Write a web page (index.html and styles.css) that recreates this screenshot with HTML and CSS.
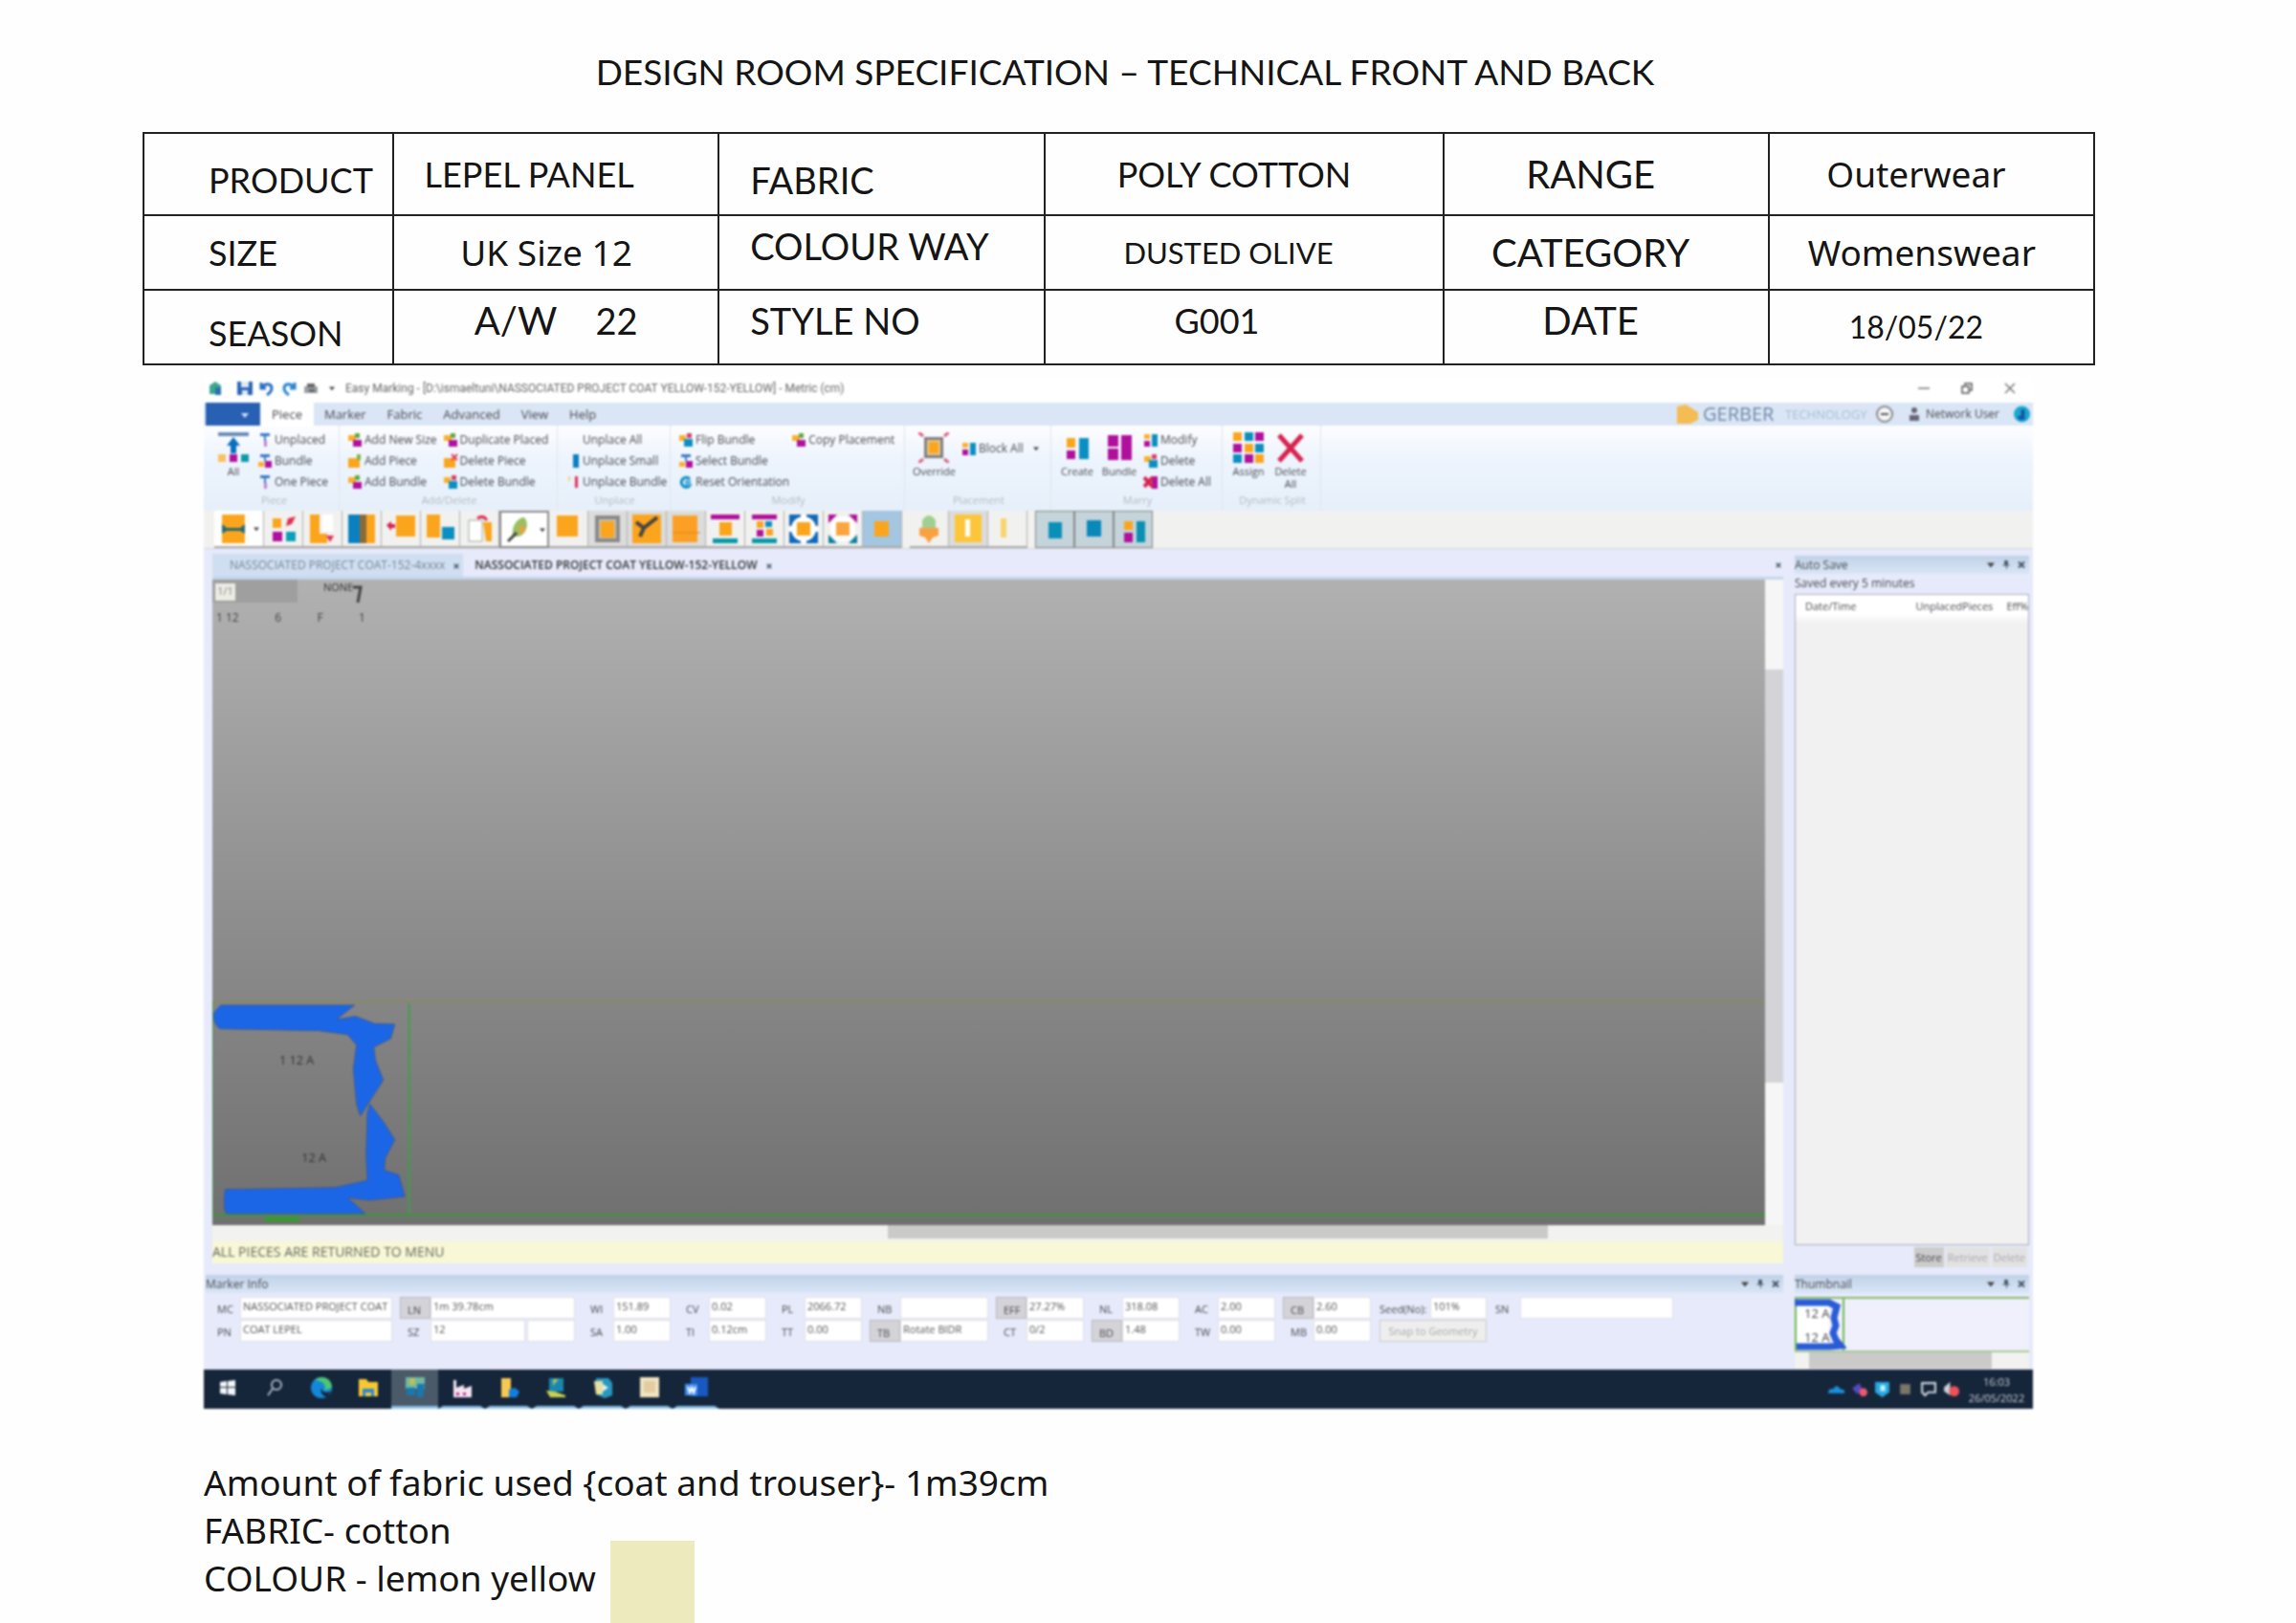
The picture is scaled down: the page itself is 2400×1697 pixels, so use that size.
FILE: index.html
```html
<!DOCTYPE html>
<html lang="en">
<head>
<meta charset="utf-8">
<title>Design Room Specification</title>
<link rel="stylesheet" href="styles.css">
</head>
<body>
<svg class="defs" aria-hidden="true">
  <symbol id="i-bundle" viewBox="0 0 16 16"><path fill="#fbb02a" d="M1 3h8v6H1z"/><path fill="#63a844" d="M8 1h5v5H8z"/><path fill="#b0109c" d="M6 8h9v7H6z"/></symbol>
  <symbol id="i-piece" viewBox="0 0 16 16"><path fill="#fba51c" d="M1 5h12v10H1z"/><path fill="#7ab648" d="M10 1h4v6h-4z"/></symbol>
  <symbol id="i-delpiece" viewBox="0 0 16 16"><path fill="#fba51c" d="M1 5h12v10H1z"/><path stroke="#e0405a" stroke-width="2" d="M9 1l6 6m0-6L9 7"/></symbol>
  <symbol id="i-blue" viewBox="0 0 16 16"><path fill="#fbb02a" d="M1 3h7v6H1z"/><path fill="#d8406a" d="M9 1h5v5H9z"/><path fill="#0a8fc0" d="M6 7h9v8H6z"/></symbol>
  <symbol id="i-pin" viewBox="0 0 16 16"><path fill="#3a78c8" d="M3 1h10v3H9v5H7V4H3z"/><path fill="#c080d0" d="M7 9h3v6H7z"/></symbol>
  <symbol id="i-pinb" viewBox="0 0 16 16"><path fill="#3a78c8" d="M3 1h10v3H9v4H7V4H3z"/><path fill="#fbb02a" d="M1 9h6v5H1z"/><path fill="#b0109c" d="M8 8h7v7H8z"/></symbol>
  <symbol id="i-bar" viewBox="0 0 16 16"><path fill="#0a7fc0" d="M8 1h6v14H8z"/></symbol>
  <symbol id="i-bang" viewBox="0 0 16 16"><path fill="#e03060" d="M10 2h3v12h-3z"/><path fill="#fbd08a" d="M3 2h2v5H3z"/></symbol>
  <symbol id="i-reset" viewBox="0 0 16 16"><path fill="none" stroke="#0a8fc0" stroke-width="3" d="M12 5a5 5 0 1 0 1 5"/><path fill="#58b0e0" d="M7 6h6v6H7z"/></symbol>
  <symbol id="i-marry" viewBox="0 0 16 16"><path fill="#fbb02a" d="M1 2h6v5H1z"/><path fill="#b0109c" d="M1 9h6v6H1z"/><path fill="#0a8fc0" d="M9 2h6v13H9z"/></symbol>
  <symbol id="i-marryx" viewBox="0 0 16 16"><path fill="#b0109c" d="M9 2h6v13H9z"/><path stroke="#d8234e" stroke-width="4" d="M1 3l9 10M10 3L1 13"/></symbol>
  <symbol id="i-caret" viewBox="0 0 8 8"><path fill="#444" d="M0 2h8L4 7z"/></symbol>
  <symbol id="i-push" viewBox="0 0 8 10"><path fill="#456" d="M2 0h4v5h2v1H5v4H4V6H0V5h2z"/></symbol>
  <symbol id="i-x" viewBox="0 0 8 8"><path stroke="#456" stroke-width="2" d="M1 1l6 6m0-6L1 7"/></symbol>
</svg>

<h1 class="sheet-title">DESIGN ROOM SPECIFICATION – TECHNICAL FRONT AND BACK</h1>

<table class="spec">
  <colgroup><col class="c1"><col class="c2"><col class="c2"><col class="c4"><col class="c2"><col class="c2"></colgroup>
  <tr class="r1">
    <th class="left low">PRODUCT</th><td class="far">LEPEL PANEL</td><th class="name low">FABRIC</th><td class="near">POLY COTTON</td><th class="wide mid-left">RANGE</th><td class="human mid-left">Outerwear</td>
  </tr>
  <tr class="r2">
    <th class="left">SIZE</th><td class="human near">UK Size 12</td><th class="name high">COLOUR WAY</th><td class="tiny mid-left">DUSTED OLIVE</td><th class="wide mid-left">CATEGORY</th><td class="human near">Womenswear</td>
  </tr>
  <tr class="r2">
    <th class="left low">SEASON</th><td class="wide high">A/W<span class="year">22</span></td><th class="name high">STYLE NO</th><td class="far high">G001</td><th class="wide mid-left high">DATE</th><td class="date mid-left">18/05/22</td>
  </tr>
</table>

<main class="app">
  <header class="titlebar">
    <svg class="ic" viewBox="0 0 16 16"><path fill="#3aa890" d="M2 5l6-4 6 4v9H2z"/><path fill="#2a70b0" d="M8 7h6v8H8z"/></svg>
    <svg class="ic save" viewBox="0 0 16 16"><path fill="#2a66b4" d="M0 1h16v14H0z"/><path fill="#dfe9f6" d="M4 1h8v6H4zM5 10h6v5H5z"/></svg>
    <svg class="ic" viewBox="0 0 16 16"><path fill="none" stroke="#2a6fc0" stroke-width="3" d="M2 2v6h5M3 7c3-5 10-4 10 1 0 3-2 5-5 7"/></svg>
    <svg class="ic" viewBox="0 0 16 16"><path fill="none" stroke="#2a86d0" stroke-width="3" d="M14 2v6H9M13 7C10 2 3 3 3 8c0 3 2 5 5 7"/></svg>
    <svg class="ic" viewBox="0 0 16 16"><path fill="#9a9fa6" d="M1 6h14v7H1z"/><path fill="#666" d="M4 3h8v4H4zM6 9h6v3H6z"/></svg>
    <svg class="tick" viewBox="0 0 8 8"><use href="#i-caret"/></svg>
    <span class="caption">Easy Marking - [D:\ismaeltuni\NASSOCIATED PROJECT COAT YELLOW-152-YELLOW] - Metric (cm)</span>
    <span class="winbtns">
      <button aria-label="Minimise"><svg viewBox="0 0 12 12"><path stroke="#777" stroke-width="1.5" d="M0 6h12"/></svg></button>
      <button aria-label="Restore"><svg viewBox="0 0 12 12"><path fill="none" stroke="#555" stroke-width="1.5" d="M1 4h7v7H1zM4 3V1h7v7H9"/></svg></button>
      <button aria-label="Close"><svg viewBox="0 0 12 12"><path stroke="#777" stroke-width="1.5" d="M1 1l10 10m0-10L1 11"/></svg></button>
    </span>
  </header>

  <nav class="tabs">
    <button class="file" aria-label="File"><svg viewBox="0 0 8 8"><path fill="#cfe0ff" d="M0 2h8L4 7z"/></svg></button>
    <button class="tab on">Piece</button><button class="tab">Marker</button><button class="tab">Fabric</button><button class="tab">Advanced</button><button class="tab">View</button><button class="tab">Help</button>
    <span class="brand">
      <svg class="logo" viewBox="0 0 22 20"><path fill="#f4bc52" d="M0 2l9-2 13 8v8l-8 4H0z"/></svg>
      <b>GERBER</b><i>TECHNOLOGY</i>
      <svg class="round" viewBox="0 0 20 20"><circle cx="10" cy="10" r="8" fill="#f4f6fa" stroke="#888" stroke-width="2"/><path stroke="#555" stroke-width="2" d="M6 10h8"/></svg>
      <svg class="user" viewBox="0 0 12 16"><circle cx="6" cy="4" r="3" fill="#667"/><path fill="#667" d="M1 15V9h10v6z"/></svg>
      <span class="who">Network User</span>
      <svg class="globe" viewBox="0 0 18 18"><circle cx="9" cy="9" r="9" fill="#18a8d0"/><path fill="#1a50a0" d="M8 4h4v7H8zM4 11h8v4H6z"/></svg>
    </span>
  </nav>

  <section class="ribbon">
    <div class="group g1"><div class="tools">
      <button class="big"><svg viewBox="0 0 32 32"><path fill="#6a8cb4" d="M0 0h32v4H0z"/><path fill="#0a6fc0" d="M16 5l7 9h-4v8h-6v-8H9z"/><path fill="#fbc060" d="M0 23h8v8H0z"/><path fill="#b0109c" d="M12 23h8v8h-8z"/><path fill="#0a9aa8" d="M24 23h8v8h-8z"/></svg>All</button>
      <div class="stack"><button><svg><use href="#i-pin"/></svg>Unplaced</button><button><svg><use href="#i-pinb"/></svg>Bundle</button><button><svg><use href="#i-pin"/></svg>One Piece</button></div>
    </div><h2>Piece</h2></div>
    <div class="group g2"><div class="tools">
      <div class="stack"><button><svg><use href="#i-bundle"/></svg>Add New Size</button><button><svg><use href="#i-piece"/></svg>Add Piece</button><button><svg><use href="#i-bundle"/></svg>Add Bundle</button></div>
      <div class="stack"><button><svg><use href="#i-bundle"/></svg>Duplicate Placed</button><button><svg><use href="#i-delpiece"/></svg>Delete Piece</button><button><svg><use href="#i-blue"/></svg>Delete Bundle</button></div>
    </div><h2>Add/Delete</h2></div>
    <div class="group g3"><div class="tools">
      <div class="stack"><button><svg></svg>Unplace All</button><button><svg><use href="#i-bar"/></svg>Unplace Small</button><button><svg><use href="#i-bang"/></svg>Unplace Bundle</button></div>
    </div><h2>Unplace</h2></div>
    <div class="group g4"><div class="tools">
      <div class="stack"><button><svg><use href="#i-blue"/></svg>Flip Bundle</button><button><svg><use href="#i-pinb"/></svg>Select Bundle</button><button><svg><use href="#i-reset"/></svg>Reset Orientation</button></div>
      <div class="stack"><button><svg><use href="#i-bundle"/></svg>Copy Placement</button></div>
    </div><h2>Modify</h2></div>
    <div class="group g5"><div class="tools">
      <button class="big"><svg viewBox="0 0 32 32"><path fill="#7f7f7f" d="M6 5h20v22H6z"/><path fill="#e8c890" d="M9 8h14v16H9z"/><path fill="#fba51c" d="M11 10h10v12H11z"/><path stroke="#e06080" stroke-width="3" d="M0 0l5 4M32 0l-5 4M0 32l5-4M32 32l-5-4"/></svg>Override</button>
      <div class="stack mid"><button><svg><use href="#i-marry"/></svg>Block All <svg class="car"><use href="#i-caret"/></svg></button></div>
    </div><h2>Placement</h2></div>
    <div class="group g6"><div class="tools">
      <button class="big"><svg viewBox="0 0 32 32"><path fill="#fba51c" d="M5 6h9v10H5z"/><path fill="#b0109c" d="M5 19h9v9H5z"/><path fill="#0a8fc0" d="M18 6h10v22H18z"/></svg>Create</button>
      <button class="big"><svg viewBox="0 0 32 32"><path fill="#b0109c" d="M4 3h11v12H4zM4 17h11v12H4zM18 3h11v26H18z"/></svg>Bundle</button>
      <div class="stack"><button><svg><use href="#i-marry"/></svg>Modify</button><button><svg><use href="#i-blue"/></svg>Delete</button><button><svg><use href="#i-marryx"/></svg>Delete All</button></div>
    </div><h2>Marry</h2></div>
    <div class="group g7"><div class="tools">
      <button class="big"><svg viewBox="0 0 32 32"><path fill="#fba51c" d="M0 0h9v9H0zM12 12h9v9h-9zM23 23h9v9h-9z"/><path fill="#0a8fc0" d="M12 0h9v9h-9zM23 12h9v9h-9zM0 23h9v9H0z"/><path fill="#b0109c" d="M23 0h9v9h-9zM0 12h9v9H0zM12 23h9v9h-9z"/></svg>Assign</button>
      <button class="big"><svg viewBox="0 0 32 32"><path stroke="#d8234e" stroke-width="5" d="M4 3l24 27M28 3L4 30"/></svg>Delete<br>All</button>
    </div><h2>Dynamic Split</h2></div>
  </section>

  <section class="toolbar">
    <button class="drop" aria-label="Flip"><svg viewBox="0 0 30 30"><path fill="#fba51c" d="M3 0h24v30H3z"/><path fill="#1f6a78" d="M3 10l5 4h14l5-4v10l-5-3H8l-5 3z"/></svg><svg class="car"><use href="#i-caret"/></svg></button>
    <button aria-label="Swap"><svg viewBox="0 0 30 30"><path fill="#fba51c" d="M4 4h9v10H4z"/><path fill="#b0109c" d="M4 18h10v10H4z"/><path fill="#0aa0b8" d="M18 18h10v10H18z"/><path fill="#e03050" d="M18 12l2-8 8-2-4 8z"/></svg></button>
    <button aria-label="Corner"><svg viewBox="0 0 30 30"><path fill="#fba51c" d="M2 0h10v20h8v10H2z"/><path fill="#e03060" d="M19 22h8l-4 7z"/><path fill="#fff" d="M15 0h11v18H15z"/></svg></button>
    <button aria-label="Split"><svg viewBox="0 0 30 30"><path fill="#0a80c0" d="M1 0h12v30H1z"/><path fill="#8a6a3a" d="M13 0h7v30h-7z"/><path fill="#fba51c" d="M20 0h9v30h-9z"/></svg></button>
    <button aria-label="Move left"><svg viewBox="0 0 30 30"><path fill="#fba51c" d="M10 1h20v22H10z"/><path fill="#d82050" d="M0 11l5-4v3h4v4H5v3z"/></svg></button>
    <button aria-label="Join"><svg viewBox="0 0 30 30"><path fill="#fba51c" d="M1 0h14v24H1z"/><path fill="#0a8fc0" d="M17 13h13v13H17z"/></svg></button>
    <button aria-label="Rotate"><svg viewBox="0 0 30 30"><path fill="#fff" stroke="#9a9" d="M4 6h14v22H4z"/><path fill="#fba51c" d="M19 8h9v20h-6z"/><path fill="none" stroke="#e03050" stroke-width="3" d="M13 4q6-4 10 2"/></svg></button>
    <button class="drop sel" aria-label="Brush"><svg viewBox="0 0 30 30"><path fill="#9ac060" d="M8 22C6 10 14 2 20 2c6 6 2 18-6 20z"/><path fill="#f0a040" d="M15 10l7 3-6 8z"/><path stroke="#444" stroke-width="3" d="M3 27l9-9"/></svg><svg class="car"><use href="#i-caret"/></svg></button>
    <button aria-label="Piece"><svg viewBox="0 0 30 30"><path fill="#fba51c" d="M3 1h22v22H3z"/></svg></button>
    <button class="dark" aria-label="Frame"><svg viewBox="0 0 30 30"><path fill="#8a8a8a" d="M2 1h26v28H2z"/><path fill="#c8c0b0" d="M6 5h18v20H6z"/><path fill="#fba51c" d="M8 7h14v17H8z"/></svg></button>
    <button class="dark" aria-label="Cut"><svg viewBox="0 0 30 30"><path fill="#fba51c" d="M0 0h30v30H0z"/><path stroke="#444" stroke-width="4" fill="none" d="M4 8l8 6L26 3M12 14l-4 9"/></svg></button>
    <button class="dark" aria-label="Grid"><svg viewBox="0 0 30 30"><path fill="#fba024" d="M1 1h26v28H1z"/><path stroke="#e88010" d="M1 19h29"/></svg></button>
    <button aria-label="Fit height"><svg viewBox="0 0 30 30"><path fill="#b0109c" d="M0 0h30v5H0z"/><path fill="#0a98a8" d="M2 25h26v5H2z"/><path fill="#fba51c" d="M9 8h13v14H9z"/></svg></button>
    <button aria-label="Fit pieces"><svg viewBox="0 0 30 30"><path fill="#b0109c" d="M2 0h26v5H2z"/><path fill="#0a98a8" d="M2 25h26v5H2z"/><path fill="#fba51c" d="M7 7h7v7H7zM17 15h7v7h-7z"/><path fill="#b0109c" d="M7 16h7v7H7z"/><path fill="#0a8fc0" d="M16 7h7v6h-7z"/></svg></button>
    <button aria-label="Zoom all"><svg viewBox="0 0 30 30"><path fill="#1068b8" d="M0 0h30v30H0z"/><circle cx="15" cy="15" r="13" fill="#fff"/><path fill="#fff" d="M12 0h6v30h-6zM0 12h30v6H0z"/><path fill="#fba51c" d="M8 8h14v14H8z"/></svg></button>
    <button aria-label="Zoom piece"><svg viewBox="0 0 30 30"><path fill="#b0109c" d="M0 0h9L0 9zM30 0h-9l9 9z"/><path fill="#0a8098" d="M0 30h9l-9-9zM30 30h-9l9-9z"/><circle cx="15" cy="15" r="13" fill="#fff"/><path fill="#fba540" d="M8 8h14v14H8z"/></svg></button>
    <button class="blue" aria-label="Centre"><svg viewBox="0 0 30 30"><path fill="#fba51c" d="M7 7h15v16H7z"/></svg></button>
    <span class="gap"></span>
    <button aria-label="Lift"><svg viewBox="0 0 30 30"><path fill="#a0d090" d="M8 6q7-10 14 0v8H8z"/><path fill="#fba040" d="M5 14h20v8l-6 2-4 6-4-6-6-2z"/></svg></button>
    <button class="dark" aria-label="Warn"><svg viewBox="0 0 30 30"><path fill="#fdc63a" d="M1 0h28v29H1z"/><path fill="#fff" d="M12 5h5v18h-5z"/></svg></button>
    <button aria-label="Strip"><svg viewBox="0 0 30 30"><path fill="#f8d470" d="M8 4h6v20H8z"/></svg></button>
    <span class="gap"></span>
    <button class="dark framed" aria-label="View one"><svg viewBox="0 0 30 30"><path fill="#0a90b8" d="M8 7h14v17H8z"/></svg></button>
    <button class="dark framed" aria-label="View two"><svg viewBox="0 0 30 30"><path fill="#0a88b8" d="M7 5h15v17H7z"/></svg></button>
    <button class="dark framed" aria-label="View three"><svg viewBox="0 0 30 30"><path fill="#fba51c" d="M5 6h9v9H5z"/><path fill="#b0109c" d="M5 18h9v10H5z"/><path fill="#0a90b0" d="M18 6h9v22h-9z"/></svg></button>
  </section>

  <div class="work">
    <section class="left-side">
      <div class="docs">
        <span class="doc">NASSOCIATED PROJECT COAT-152-4xxxx <svg class="x"><use href="#i-x"/></svg></span>
        <span class="doc cur">NASSOCIATED PROJECT COAT YELLOW-152-YELLOW <svg class="x"><use href="#i-x"/></svg></span>
        <svg class="x end"><use href="#i-x"/></svg>
      </div>
      <div class="view">
        <div class="canvas">
          <div class="menu"><span class="chip">1/1</span><span class="none">NONE</span><svg class="hook" viewBox="0 0 10 22"><path fill="none" stroke="#444" stroke-width="3" d="M0 4h8L5 20"/></svg></div>
          <div class="counts"><span>1 12</span><span>6</span><span>F</span><span>1</span></div>
          <div class="fabric"></div>
          <svg class="pieces" viewBox="66 60 900 720">
            <path stroke="#3f9f48" stroke-width="6" d="M683 84v660"/>
            <path fill="#1b66e6" stroke="#3a5a9a" stroke-width="3" d="M92 90H512L455 135 515 125 575 148 638 150 625 195 572 222 578 265 602 325 560 390 530 438 518 400 508 290 518 215 490 182 400 170 90 164Q68 150 70 115Z"/>
            <path fill="#1b66e6" stroke="#3a5a9a" stroke-width="3" d="M560 400L605 460 638 512 608 570 605 608 650 622 670 690 560 702 490 694 546 744 110 744Q98 730 106 668L450 662 552 640 548 560 552 430Z"/>
            <path fill="#2fa028" d="M230 756h110v12H230z"/>
            <text x="276" y="276">1 12 A</text><text x="346" y="582">12 A</text>
          </svg>
        </div>
        <div class="vscroll"></div>
      </div>
      <div class="hscroll"><div></div></div>
      <p class="status">ALL PIECES ARE RETURNED TO MENU</p>
    </section>
    <aside class="autosave">
      <h3>Auto Save <span class="pins"><svg><use href="#i-caret"/></svg><svg><use href="#i-push"/></svg><svg><use href="#i-x"/></svg></span></h3>
      <p>Saved every 5 minutes</p>
      <div class="list"><span>Date/Time</span><span>UnplacedPieces</span><span>Eff%</span></div>
      <div class="acts"><button class="first">Store</button><button>Retrieve</button><button>Delete</button></div>
    </aside>
    <section class="info">
      <h3>Marker Info <span class="pins"><svg><use href="#i-caret"/></svg><svg><use href="#i-push"/></svg><svg><use href="#i-x"/></svg></span></h3>
      <form class="fields">
        <div class="pair w1"><label for="mc">MC</label><input id="mc" value="NASSOCIATED PROJECT COAT"><label for="pn">PN</label><input id="pn" value="COAT LEPEL"></div>
        <div class="pair w2"><label class="key" for="ln">LN</label><input id="ln" value="1m 39.78cm"><label for="sz">SZ</label><span class="split"><input id="sz" value="12"><input aria-label="Size 2"></span></div>
        <div class="pair w3"><label for="wi">WI</label><input id="wi" value="151.89"><label for="sa">SA</label><input id="sa" value="1.00"></div>
        <div class="pair w3"><label for="cv">CV</label><input id="cv" value="0.02"><label for="ti">TI</label><input id="ti" value="0.12cm"></div>
        <div class="pair w3"><label for="pl">PL</label><input id="pl" value="2066.72"><label for="tt">TT</label><input id="tt" value="0.00"></div>
        <div class="pair w4"><label for="nb">NB</label><input id="nb"><label class="key" for="tb">TB</label><input id="tb" value="Rotate BIDR"></div>
        <div class="pair w3"><label class="key" for="ef">EFF</label><input id="ef" value="27.27%"><label for="ct">CT</label><input id="ct" value="0/2"></div>
        <div class="pair w3"><label for="nl">NL</label><input id="nl" value="318.08"><label class="key" for="bd">BD</label><input id="bd" value="1.48"></div>
        <div class="pair w3"><label for="ac">AC</label><input id="ac" value="2.00"><label for="tw">TW</label><input id="tw" value="0.00"></div>
        <div class="pair w3"><label class="key" for="cb">CB</label><input id="cb" value="2.60"><label for="mb">MB</label><input id="mb" value="0.00"></div>
        <div class="pair w5"><label for="sd">Seed(No):</label><input id="sd" value="101%"><button type="button">Snap to Geometry</button></div>
        <div class="pair w6"><label for="sn">SN</label><input id="sn"></div>
      </form>
    </section>
    <aside class="thumb">
      <h3>Thumbnail <span class="pins"><svg><use href="#i-caret"/></svg><svg><use href="#i-push"/></svg><svg><use href="#i-x"/></svg></span></h3>
      <div class="mini"><svg viewBox="0 0 54 54"><path fill="#fff" d="M0 0h36v54H0z"/><path stroke="#70b850" stroke-width="2" d="M51 0v54M1 0v54"/><text x="10" y="20">12 A</text><text x="10" y="45">12 A</text><path fill="none" stroke="#2a5cd8" stroke-width="7" d="M0 4h36l8 4-3 12 2 8-3 8 3 7 5 6-12 1H2"/></svg></div>
      <div class="hscroll"><div></div></div>
    </aside>
  </div>

  <footer class="taskbar">
    <button aria-label="Start"><svg viewBox="0 0 24 24"><path fill="#f2f6fa" d="M4 6l7-1v6H4zM12 5l8-1v7h-8zM4 12h7v7l-7-1zM12 12h8v8l-8-1z"/></svg></button>
    <button aria-label="Search"><svg viewBox="0 0 24 24"><circle cx="14" cy="9" r="5" fill="none" stroke="#a8b4c0" stroke-width="2"/><path stroke="#a8b4c0" stroke-width="2" d="M10 13l-5 7"/></svg></button>
    <button aria-label="Browser"><svg viewBox="0 0 24 24"><circle cx="12" cy="12" r="11" fill="#1488d8"/><path fill="#4cc870" d="M5 4c6-6 18-3 18 8l-8 3c4-8-6-11-10-11z"/><path fill="#16263a" d="M12 12c0 4 4 6 10 4l-4 6c-4-1-8-5-6-10z"/></svg></button>
    <button aria-label="Explorer"><svg viewBox="0 0 24 24"><path fill="#f8c830" d="M2 3h8l2 3h10v15H2z"/><path fill="#2a88d0" d="M6 13h12v8h-3v-4H9v4H6z"/></svg></button>
    <button class="run act" aria-label="Marking"><svg viewBox="0 0 24 24"><path fill="#70b8a0" d="M2 1h20v12H2z"/><path fill="#1878b0" d="M3 12h9v8H3zM14 8h8l-2 14h-6z"/><path fill="#b8c060" d="M6 2h6v7H6z"/></svg></button>
    <button class="run" aria-label="Plot"><svg viewBox="0 0 24 24"><path fill="#f4e4f0" d="M3 4h3v8l8-3v4l8-3v12H3z"/><path fill="#c03090" d="M6 17h3v3H6zM13 17h3v3h-3z"/></svg></button>
    <button class="run" aria-label="Folder"><svg viewBox="0 0 24 24"><path fill="#f8c850" d="M4 2h10v20H4z"/><path fill="#1080e0" d="M12 14l6-2 5 4-3 6h-8z"/></svg></button>
    <button class="run" aria-label="Edit"><svg viewBox="0 0 24 24"><path fill="#1888b0" d="M5 2h15v14H5z"/><path fill="#c8d050" d="M2 15l9 1 11 4v2H6z"/><path fill="#a8c060" d="M9 3h6l-6 7z"/></svg></button>
    <button class="run" aria-label="Convert"><svg viewBox="0 0 24 24"><path fill="#2898c0" d="M5 2h13l4 5v13l-8 3-9-4z"/><path fill="#e8e0a0" d="M3 5h9v14H5z"/><path fill="#e0f0f4" d="M12 8l6 4-6 4z"/></svg></button>
    <button class="run" aria-label="Notes"><svg viewBox="0 0 24 24"><path fill="#f0e4c0" d="M2 1h20v21H2z"/><path fill="#e4cca0" d="M6 5h12v12H6z"/></svg></button>
    <button class="run" aria-label="Word"><svg viewBox="0 0 24 24"><path fill="#1858c0" d="M6 1h18v20H6z"/><path fill="#4090f0" d="M0 8h13v12H0z"/><path fill="none" stroke="#fff" stroke-width="2" d="M3 11l2 6 2-5 2 5 2-6"/></svg></button>
    <span class="tray">
      <svg viewBox="0 0 16 16"><path fill="#1890e0" d="M0 12q0-5 5-4 3-6 7 0 5 0 4 4z"/></svg>
      <svg viewBox="0 0 16 16"><path fill="#5848c0" d="M1 7l7-5 3 6-5 5z"/><circle cx="12" cy="11" r="4" fill="#f05870"/></svg>
      <svg viewBox="0 0 16 16"><path fill="#28a8e0" d="M1 1h14v10l-7 5-7-5z"/><path fill="#c0f0ff" d="M6 4h5v6H6z"/></svg>
      <svg viewBox="0 0 16 16"><path fill="#7a7668" d="M3 3h10v10H3z"/></svg>
      <svg viewBox="0 0 16 16"><path fill="none" stroke="#c8d0d8" stroke-width="2" d="M2 2h13v9H8l-3 3-3-3z"/></svg>
      <svg viewBox="0 0 16 16"><path fill="#c8d0d8" d="M1 6l6-5v13l-6-4z"/><circle cx="11" cy="10" r="5" fill="#f05058"/></svg>
      <time>16:03<br>26/05/2022</time>
    </span>
  </footer>
</main>

<section class="notes">
  <p>Amount of fabric used {coat and trouser}- 1m39cm</p>
  <div class="swatch-row">
    <div><p>FABRIC- cotton</p><p>COLOUR - lemon yellow</p></div>
    <div class="swatch"></div>
  </div>
</section>
</body>
</html>
```
FILE: styles.css
```css
* { box-sizing: border-box; }
body { margin: 0; background: #fefefe; color: #151515; font-family: Lato, sans-serif; overflow-x: hidden; }
h1, h2, h3, p { margin: 0; font-weight: 400; }
button { border: 0; padding: 0; background: none; font: inherit; color: inherit; }
.defs { display: none; }

.sheet-title { padding-top: 50px; padding-right: 48px; font-size: 37px; line-height: 50px; text-align: center; }

/* specification table */
.spec { width: calc(100% - 359px); margin: 38px 0 0 149px; border-collapse: collapse; table-layout: fixed; font-size: 36px; line-height: 40px; }
.spec th, .spec td { border: 2px solid #222; padding: 0; font-weight: 400; text-align: center; white-space: nowrap; }
.c1 { width: 261px; }
.c4 { width: 417px; }
.r1 { height: 86px; }
.r2 { height: 78px; }
.spec .left { text-align: left; padding-left: 67px; }
.spec .name { text-align: left; padding-left: 32px; font-size: 38px; }
.spec .low { padding-top: 12px; }
.spec .high { padding-bottom: 14px; }
.spec .near { padding-right: 20px; }
.spec .mid-left { padding-right: 32px; }
.spec .far { padding-right: 56px; }
.spec .wide { font-size: 40px; }
.spec .tiny { font-size: 31px; }
.spec .date { font-size: 32px; }
.spec .human { font-family: "Noto Sans", sans-serif; font-size: 37px; }
.year { margin-left: 40px; font-size: 38px; }

/* marker-making application, a soft low-resolution screen grab */
.app { margin: 12px 275px 0 213px; font-family: "Open Sans", sans-serif; font-size: 12px; line-height: 16px; color: #4a4a50; background: #e6eafa; filter: blur(1px); }
.titlebar { display: flex; align-items: center; gap: 7px; height: 27px; padding: 0 18px 4px 4px; background: #fff; }
.ic { width: 16px; height: 16px; }
.save { margin-left: 8px; }
.tick { width: 6px; height: 6px; margin: 0 4px; }
.caption { font-family: Roboto, sans-serif; color: #666; }
.winbtns { display: flex; gap: 33px; margin-left: auto; }
.winbtns svg { display: block; width: 12px; height: 12px; }

.tabs { display: flex; align-items: stretch; height: 24px; background: #dae6f5; font-size: 13px; }
.file { width: 57px; margin-left: 2px; padding-left: 24px; background: #2860b4; }
.file svg { width: 8px; height: 8px; }
.tab { padding: 0 11px; }
.tab.on { padding: 0 12px; background: #fff; }
.brand { display: flex; align-items: center; margin-left: auto; padding-right: 3px; }
.logo { width: 22px; height: 20px; margin-right: 5px; }
.brand b { width: 86px; font-size: 20px; font-weight: 400; color: #6f87a6; }
.brand i { width: 94px; font-size: 13px; font-style: normal; color: #a9bdd4; }
.round { width: 20px; height: 20px; margin-right: 15px; }
.user { width: 12px; height: 16px; margin-right: 6px; }
.who { width: 92px; font-size: 12px; }
.globe { width: 17px; height: 18px; }

.ribbon { display: flex; height: 89px; padding-left: 4px; background: linear-gradient(#fdfdff, #edf4fd 40%, #e6f0fa); }
.group { display: flex; flex-direction: column; justify-content: space-between; padding: 4px 6px 4px 8px; border-right: 1px solid #dfe4ee; }
.group h2 { font-size: 11px; line-height: 14px; text-align: center; color: #b4b8c0; }
.tools { display: flex; gap: 6px; }
.g1 { width: 138px; }
.g2 { width: 228px; }
.g3 { width: 118px; }
.g4 { width: 245px; }
.g4 .tools { gap: 2px; }
.g5 { width: 153px; }
.g6 { width: 179px; }
.g7 { width: 103px; }
.stack { display: flex; flex-direction: column; }
.stack button { display: flex; align-items: center; height: 22px; gap: 2px; white-space: nowrap; }
.stack svg { width: 16px; height: 16px; }
.stack .car, .car { width: 6px; height: 6px; margin-left: 8px; }
.mid { padding-top: 9px; }
.big { display: flex; flex-direction: column; align-items: center; min-width: 38px; padding-top: 3px; font-size: 11px; line-height: 13px; }
.big svg { width: 32px; height: 32px; margin-bottom: 2px; }

.toolbar { display: flex; height: 40px; padding-left: 11px; background: #f1f1f0; border-bottom: 1px solid #d8d8de; }
.toolbar button { display: flex; align-items: center; justify-content: center; width: 41px; height: 39px; border-right: 1px solid #b0b0b0; border-bottom: 2px solid #a8a8a8; }
.toolbar svg { width: 32px; height: 30px; }
.toolbar .drop { width: 52px; background: #fff; }
.toolbar .car { width: 6px; height: 6px; margin-left: 5px; }
.toolbar .sel { border: 2px solid #8a8a8a; }
.toolbar .dark { background: #dcdcdc; }
.toolbar .blue { background: #a4c6e0; }
.toolbar .framed { border: 1px solid #888; background: #c4d4da; }
.toolbar .gap { width: 8px; }

.work { display: grid; grid-template-columns: 1fr 245px; column-gap: 12px; padding: 0 4px 0 2px; }
.left-side { padding: 5px 0 12px 7px; }
.docs { display: flex; align-items: center; height: 27px; font-size: 12px; border-bottom: 3px solid #c4d6ec; }
.doc { padding: 0 4px 0 18px; color: #7a8898; background: #cfdef0; white-space: nowrap; line-height: 24px; }
.cur { padding-left: 12px; color: #333; background: none; font-weight: 600; }
.x { width: 6px; height: 6px; margin-left: 6px; }
.end { margin: 0 2px 0 auto; }
.view { display: flex; }
.canvas { position: relative; flex: 1; height: 675px; background: linear-gradient(#b1b1b1, #8c8c8c 55%, #707070); }
.vscroll { width: 19px; background: linear-gradient(#f6f6f6 14%, #d4d4d8 14%, #d4d4d8 78%, #f6f6f6 78%); }
.menu { display: flex; width: 89px; height: 24px; padding: 4px 0 0 3px; background: #9f9f9f; font-size: 11px; color: #333; }
.chip { flex: none; width: 21px; height: 18px; text-align: center; background: #ecece4; color: #888; }
.none { margin-left: 92px; line-height: 8px; }
.hook { flex: none; width: 10px; height: 22px; }
.counts { display: flex; width: 160px; justify-content: space-between; padding-left: 4px; font-size: 12px; line-height: 32px; color: #444; }
.fabric { position: absolute; inset: auto 0 9px 0; height: 226px; border-top: 2px solid #888a62; border-bottom: 3px solid #4a8c48; border-left: 1px solid #4a8c48; }
.pieces { position: absolute; left: 0; bottom: 0; width: 300px; height: 240px; }
.pieces text { font-size: 38px; fill: #333; }
.hscroll { height: 17px; background: #f2f2f0; }
.hscroll div { width: 42%; height: 14px; margin-left: 43%; background: #cacac8; }
.status { height: 23px; font-size: 14px; line-height: 22px; background: #f8f8d6; color: #66665c; }

.work h3 { display: flex; align-items: center; height: 19px; font-size: 12px; line-height: 19px; background: linear-gradient(#c0d2e8, #d8e6f6); }
.pins { display: flex; align-items: center; gap: 8px; margin-left: auto; padding-right: 4px; }
.pins svg { width: 8px; height: 9px; }
.autosave { display: flex; flex-direction: column; padding: 7px 0 8px; }
.autosave p { height: 21px; line-height: 20px; }
.list { flex: 1; display: flex; justify-content: space-between; padding: 4px 0 0 10px; font-size: 11px; line-height: 16px; border: 1px solid #aab; background: linear-gradient(#fff 20px, #f1f1f1 30px); }
.list span:first-child { margin-right: 48px; }
.acts { display: flex; justify-content: flex-end; height: 23px; gap: 2px; padding: 2px 2px 0 0; font-size: 11px; color: #aaa; }
.acts button { padding: 0 2px; background: #e2e2e2; }
.acts .first { color: #444; background: #ccc; }

.fields { display: flex; height: 80px; padding: 4px 0 0 5px; gap: 9px; font-size: 11px; }
.pair { display: grid; grid-template-columns: 31px 1fr; grid-auto-rows: 23px; align-content: start; row-gap: 1px; }
.pair label { padding: 4px 0 0 7px; line-height: 18px; }
.pair .key { margin-left: -1px; background: #d4d4d8; border: 1px solid #b8b8bc; }
.pair input { min-width: 0; width: 100%; height: 23px; padding: 0 2px 4px; border: 1px solid #e0e0e6; background: #fff; font: inherit; color: #555; }
.w1 { width: 190px; }
.w2 { width: 182px; }
.w3 { width: 91px; }
.w4 { width: 123px; }
.w5 { width: 112px; grid-template-columns: 53px 1fr; }
.w5 label { padding-left: 0; }
.w5 button { grid-column: span 2; background: #eee; border: 1px solid #ccc; color: #aaa; }
.w6 { width: 186px; grid-template-columns: 26px 1fr; }
.w6 label { padding-left: 0; }
.split { display: grid; grid-template-columns: 2fr 1fr; gap: 2px; }

.mini { height: 62px; padding-top: 6px; background: linear-gradient(#e6eafa 4px, #88b868 4px, #88b868 6px, #f0f0fc 6px); border-bottom: 2px solid #a8c898; }
.mini svg { display: block; width: 54px; height: 54px; }
.mini text { font-size: 13px; fill: #444; }
.thumb .hscroll div { width: 78%; margin-left: 6%; height: 17px; }

.taskbar { display: flex; align-items: stretch; height: 41px; background: #16263a; }
.taskbar button { width: 49px; padding: 4px 0 0; border-bottom: 3px solid transparent; }
.taskbar button svg { width: 24px; height: 24px; }
.taskbar .run { border-bottom-color: #8cc0e8; border-left: 5px solid #16263a; border-right: 5px solid #16263a; }
.taskbar .act { background: #4a5a68; border-left: 0; border-right: 0; }
.tray { display: flex; align-items: center; gap: 7px; margin-left: auto; padding-right: 6px; }
.tray svg { width: 17px; height: 17px; }
.tray time { width: 64px; font-size: 11px; line-height: 17px; text-align: center; color: #c8d0d8; }

.notes { padding: 52px 0 0 213px; font-family: "Noto Sans", sans-serif; font-size: 37px; line-height: 50px; }
.swatch-row { display: flex; gap: 15px; height: 122px; }
.swatch { align-self: flex-end; width: 88px; height: 86px; background: #edeabe; }
```
